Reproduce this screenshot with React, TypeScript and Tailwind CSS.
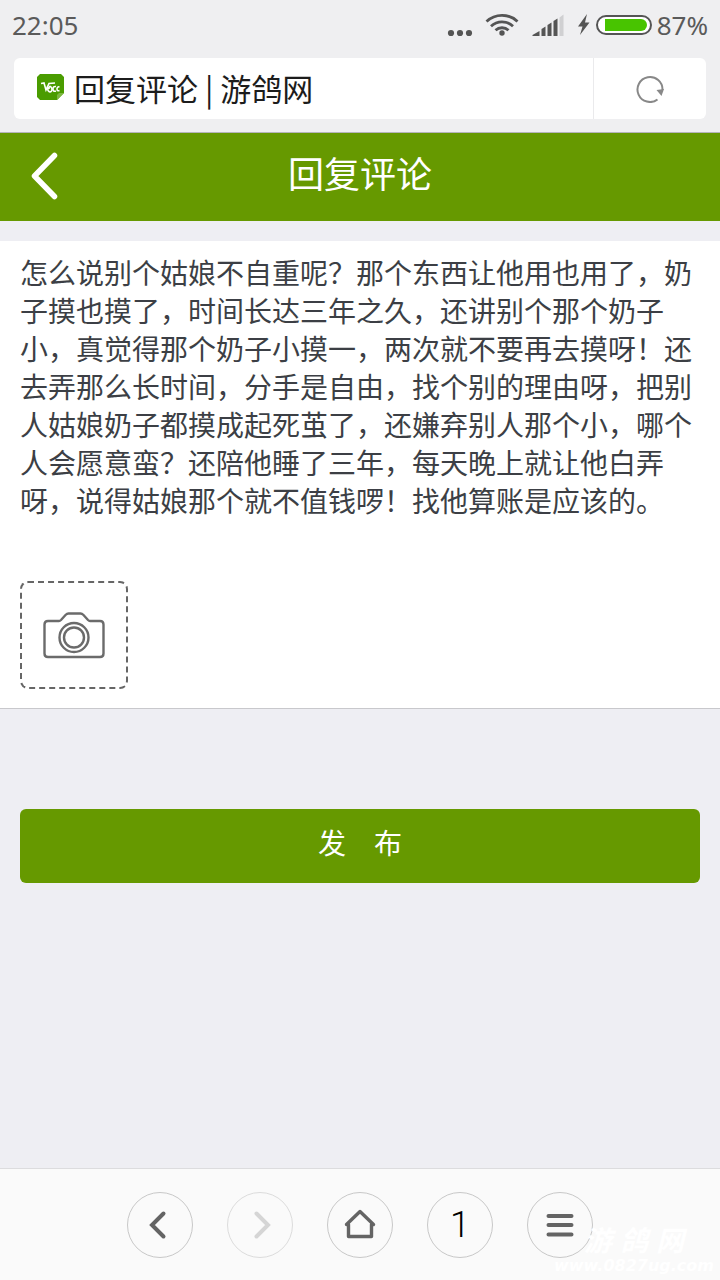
import { useState } from "react";

const COMMENT =
  "怎么说别个姑娘不自重呢？那个东西让他用也用了，奶子摸也摸了，时间长达三年之久，还讲别个那个奶子小，真觉得那个奶子小摸一，两次就不要再去摸呀！还去弄那么长时间，分手是自由，找个别的理由呀，把别人姑娘奶子都摸成起死茧了，还嫌弃别人那个小，哪个人会愿意蛮？还陪他睡了三年，每天晚上就让他白弄呀，说得姑娘那个就不值钱啰！找他算账是应该的。";

function StatusBar() {
  return (
    <div className="flex h-[50px] items-center justify-between px-3 text-[26px] leading-[50px] text-[#5a5a5a]">
      <span>22:05</span>
      <div className="flex items-center">
        <svg className="h-[50px] w-[210px]" viewBox="0 0 210 50" fill="#555">
          {/* More notifications */}
          <circle cx="4" cy="33" r="3.1" />
          <circle cx="13" cy="33" r="3.1" />
          <circle cx="22" cy="33" r="3.1" />

          {/* Wifi */}
          <circle cx="55" cy="33" r="2.7" />
          <g fill="none" stroke="#555" strokeWidth="2.8">
            <path d="M39.5 21.5a22.5 22.5 0 0 1 31 0" />
            <path d="M44 26.2a16 16 0 0 1 22 0" />
            <path d="M48.5 30.3a9.5 9.5 0 0 1 13 0" />
          </g>

          {/* Signal */}
          <path d="M85.5 36v-1l7-4v5z" />
          <path d="M94.5 36v-7l4-2.5v9.5z" />
          <path d="M100.5 36V25l4-2.5V36z" />
          <path d="M106.5 36V21l4-2.5V36z" />
          <path d="M112.500 36V17.5l4-3V36z" fill="#d0d0d2" />

          {/* Charging battery */}
          <path d="M140 14l-9 12.500h4.500l-2.500 8.500 9.500-12.500h-4.500z" />
          <rect x="150" y="16" width="54" height="18" rx="9" fill="#fff" stroke="#555" strokeWidth="2" />
          <path d="M158 19h36a6 6 0 0 1 0 12h-36z" fill="#48c400" />
        </svg>
        <span>87%</span>
      </div>
    </div>
  );
}

function AddressBar() {
  return (
    <div className="px-3.5 pt-2 pb-[13px]">
      <div className="flex h-[61px] rounded-md bg-white">
        <div className="flex flex-1 items-center gap-2.5 pb-0.5 pl-[23px]">
          <svg className="size-[27px] shrink-0" viewBox="0 0 27 27">
            <path d="M3 0h21l3 3v16l-7 7H3l-3-3V3z" fill="#4a9c00" />
            <path d="M20 26v-5l2-2h5z" fill="#7cb83f" />
            <g fill="none" stroke="#fff" strokeWidth="1.6">
              <path d="M4 9.500l3-.5 2 7 3-6.500 6-.5" />
              <path d="M10.500 12.500l.5 4q2 2.500 3.500.5t-.5-4-2 2" />
              <path d="M19 12.500q-3-.5-3 2.500t3 2M22.500 13q-2.500-.5-2.500 2t2.500 1.500" />
            </g>
          </svg>
          <span className="font-['Noto_Sans_CJK_SC',sans-serif] text-[31px] leading-10 text-[#1c1c1c]">
            回复评论 | 游鸽网
          </span>
        </div>
        <button
          type="button"
          aria-label="刷新"
          className="flex w-[113px] items-center justify-center border-l border-[#eaeaec]"
        >
          <svg className="size-7" viewBox="0 0 28 28" fill="none">
            <path
              d="M21.500 24.500A12.500 12.500 0 1 1 26.500 15"
              stroke="#888"
              strokeWidth="2"
            />
            <path d="M20.500 15l7.500-1-2.500 7z" fill="#888" />
          </svg>
        </button>
      </div>
    </div>
  );
}

function TitleBar() {
  return (
    <header className="grid h-[89px] grid-cols-[90px_1fr_90px] items-center border-t border-[#b5b5ba] bg-[#669900] text-white">
      <button type="button" aria-label="返回" className="pb-0.5 pl-[30px]">
        <svg
          className="h-12 w-[30px]"
          viewBox="0 0 30 48"
          fill="none"
          stroke="currentColor"
          strokeWidth="5.5"
          strokeLinecap="round"
          strokeLinejoin="round"
        >
          <path d="M24.500 3.500L4.500 24l20 20.500" />
        </svg>
      </button>
      <h1 className="pb-1 text-center text-[36px] leading-[52px]">回复评论</h1>
    </header>
  );
}

function ReplyForm() {
  const [text, setText] = useState(COMMENT);

  return (
    <form className="flex flex-col" onSubmit={(e) => e.preventDefault()}>
      <div className="mt-5 flex flex-col border-b border-[#c8c8cc] bg-white px-5 pt-[13px] pb-[19px]">
        <textarea
          aria-label="回复内容"
          rows={8}
          value={text}
          onChange={(e) => setText(e.target.value)}
          className="resize-none overflow-hidden text-[28px] leading-[38px] text-[#3c3f45] outline-none"
        />
        <label className="mt-[23px] flex size-[108px] items-center justify-center rounded-lg border-2 border-dashed border-[#666]">
          <input type="file" accept="image/*" aria-label="添加图片" className="sr-only" />
          <svg
            className="h-12 w-[62px]"
            viewBox="0 0 62 48"
            fill="none"
            stroke="#6b6b6b"
            strokeWidth="2.4"
          >
            <path d="M5 10h11q1 0 2-1l4.500-5q1.500-1.500 3-1.500h12q1.500 0 3 1.500l4.500 5q1 1 2 1h10q3.500 0 3.500 3.500v29q0 3.500-3.500 3.500H5q-3.500 0-3.500-3.500v-29Q1.500 10 5 10z" />
            <circle cx="31" cy="26.500" r="14.500" />
            <circle cx="31" cy="26.500" r="10" />
          </svg>
        </label>
      </div>
      <button
        type="submit"
        className="mx-5 mt-[100px] h-[74px] rounded-md bg-[#669900] pb-1.5 text-[28px] leading-10 text-white"
      >
        发&emsp;布
      </button>
    </form>
  );
}

const navButton =
  "flex size-[66px] items-center justify-center rounded-full border border-[#c8c8c8] text-[#646464]";

function BottomNav() {
  return (
    <nav className="relative mt-auto flex h-28 items-center justify-center gap-[34px] border-t border-[#dcdcde] bg-[#fafafa]">
      <button type="button" aria-label="后退" className={navButton}>
        <svg className="size-8" viewBox="0 0 32 32" fill="none" stroke="currentColor" strokeWidth="4" strokeLinecap="round">
          <path d="M19.500 4.500L8 16l11.500 11.500" />
        </svg>
      </button>
      <button
        type="button"
        aria-label="前进"
        className="flex size-[66px] items-center justify-center rounded-full border border-[#dcdcdc] text-[#d5d5d5]"
      >
        <svg className="size-8" viewBox="0 0 32 32" fill="none" stroke="currentColor" strokeWidth="4" strokeLinecap="round">
          <path d="M12.500 4.500L24 16 12.500 27.500" />
        </svg>
      </button>
      <button type="button" aria-label="主页" className={navButton}>
        <svg className="size-8" viewBox="0 0 32 32" fill="none" stroke="currentColor" strokeWidth="3.4" strokeLinejoin="round" strokeLinecap="round">
          <path d="M2.500 15.500L16 2.500l13.500 13H27.500v12h-23v-12z" />
        </svg>
      </button>
      <button
        type="button"
        aria-label="窗口 1"
        className="flex size-[66px] items-center justify-center rounded-full border border-[#c8c8c8] font-['Roboto',sans-serif] text-[36px] leading-10 font-light text-black"
      >
        1
      </button>
      <button type="button" aria-label="菜单" className={navButton}>
        <svg className="size-8" viewBox="0 0 32 32" fill="none" stroke="currentColor" strokeWidth="4" strokeLinecap="round">
          <path d="M4.500 7h23M4.500 16h23M4.500 25.500h23" />
        </svg>
      </button>

      {/* Site watermark */}
      <div className="pointer-events-none absolute right-1.5 bottom-1 flex flex-col items-center font-bold text-white italic">
        <div className="flex gap-2 text-[28px] leading-8">
          <span>游</span>
          <span>鸽</span>
          <span>网</span>
        </div>
        <span className="font-['DejaVu_Sans',sans-serif] text-[16px] leading-5">www.0827ug.com</span>
      </div>
    </nav>
  );
}

export default function App() {
  return (
    <div className="flex min-h-screen flex-col bg-[#eeeef3] font-['Noto_Sans','Noto_Sans_CJK_SC',sans-serif]">
      <div className="bg-[#efeff1]">
        <StatusBar />
        <AddressBar />
      </div>
      <TitleBar />
      <ReplyForm />
      <BottomNav />
    </div>
  );
}
